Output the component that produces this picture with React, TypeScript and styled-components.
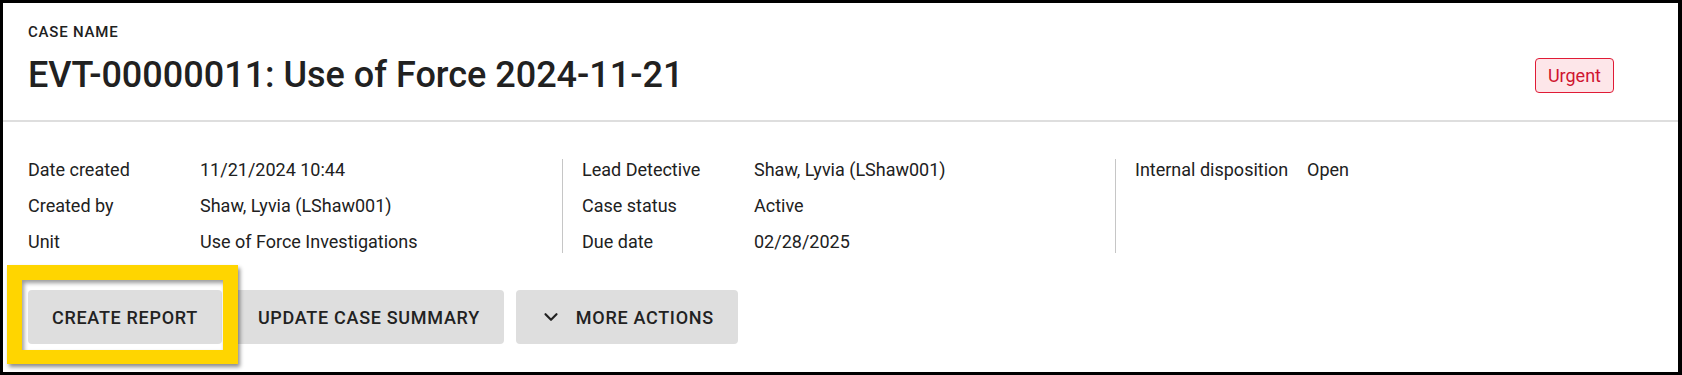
import React from 'react'
import styled, { createGlobalStyle } from 'styled-components'
import { ChevronDown } from 'lucide-react'

const GlobalStyle = createGlobalStyle`
  html, body {
    margin: 0;
    padding: 0;
    background: #fff;
  }
  body {
    font-family: Roboto, "Noto Sans", "Liberation Sans", sans-serif;
    color: #212121;
  }
  * {
    box-sizing: border-box;
  }
`

const Frame = styled.div`
  display: flex;
  flex-direction: column;
  width: 100%;
  height: 375px;
  border: 3px solid #000;
  border-right-width: 4px;
  background: #fff;
  overflow: hidden;
`

const Header = styled.header`
  padding: 20px 64px 23px 25px;
  border-bottom: 2px solid #dedede;
`

const Eyebrow = styled.div`
  font-size: 15px;
  line-height: 18px;
  font-weight: 500;
  letter-spacing: 0.8px;
  text-transform: uppercase;
`

const TitleRow = styled.div`
  display: flex;
  align-items: center;
  justify-content: space-between;
  margin-top: 12px;
`

const Title = styled.h1`
  margin: 0;
  font-size: 36px;
  line-height: 44px;
  font-weight: 500;
`

const Badge = styled.span`
  display: inline-flex;
  align-items: center;
  height: 35px;
  padding: 0 12px;
  border: 1.5px solid #e01b36;
  border-radius: 4px;
  background: #fde6e9;
  color: #cf1430;
  font-size: 18px;
`

const Details = styled.section`
  display: grid;
  grid-template-columns: 534px 553px 1fr;
  padding: 37px 0 0 25px;
`

const Column = styled.div<{ $divided?: boolean }>`
  display: flex;
  flex-direction: column;
  gap: 14px;
  height: 94px;
  padding-left: ${({ $divided }) => ($divided ? '19px' : '0')};
  border-left: ${({ $divided }) => ($divided ? '1px solid #c6c6c6' : 'none')};
`

const Row = styled.div`
  display: grid;
  grid-template-columns: 172px 1fr;
  font-size: 18px;
  line-height: 22px;
  white-space: nowrap;
`

const Actions = styled.div`
  display: flex;
  gap: 12px;
  padding: 37px 0 0 25px;
`

const Highlighted = styled.div`
  position: relative;
  display: flex;
`

const Callout = styled.span`
  position: absolute;
  top: -25px;
  left: -21px;
  right: -16px;
  bottom: -20px;
  border: 15px solid #ffd500;
  border-bottom-width: 14px;
  box-shadow: 2px 3px 4px rgba(0, 0, 0, 0.45), inset 2px 3px 4px rgba(0, 0, 0, 0.4);
  pointer-events: none;
  z-index: 1;
`

const Button = styled.button`
  display: inline-flex;
  align-items: center;
  gap: 14px;
  height: 54px;
  padding: 0 24px;
  border: none;
  border-radius: 4px;
  background: #dedede;
  color: #222;
  font-family: inherit;
  font-size: 18px;
  font-weight: 500;
  letter-spacing: 0.7px;
  text-transform: uppercase;
  cursor: pointer;
`

const details: { label: string; value: string }[][] = [
  [
    { label: 'Date created', value: '11/21/2024 10:44' },
    { label: 'Created by', value: 'Shaw, Lyvia (LShaw001)' },
    { label: 'Unit', value: 'Use of Force Investigations' },
  ],
  [
    { label: 'Lead Detective', value: 'Shaw, Lyvia (LShaw001)' },
    { label: 'Case status', value: 'Active' },
    { label: 'Due date', value: '02/28/2025' },
  ],
  [{ label: 'Internal disposition', value: 'Open' }],
]

const App: React.FC = () => {
  return (
    <>
      <GlobalStyle />
      <Frame>
        <Header>
          <Eyebrow>Case name</Eyebrow>
          <TitleRow>
            <Title>EVT-00000011: Use of Force 2024-11-21</Title>
            <Badge>Urgent</Badge>
          </TitleRow>
        </Header>

        <Details>
          {details.map((col, i) => (
            <Column key={i} $divided={i > 0}>
              {col.map((d) => (
                <Row key={d.label}>
                  <span>{d.label}</span>
                  <span>{d.value}</span>
                </Row>
              ))}
            </Column>
          ))}
        </Details>

        <Actions>
          <Highlighted>
            <Button>Create report</Button>
            <Callout />
          </Highlighted>
          <Button>Update case summary</Button>
          <Button>
            <ChevronDown size={22} strokeWidth={2.4} />
            More actions
          </Button>
        </Actions>
      </Frame>
    </>
  )
}

export default App
